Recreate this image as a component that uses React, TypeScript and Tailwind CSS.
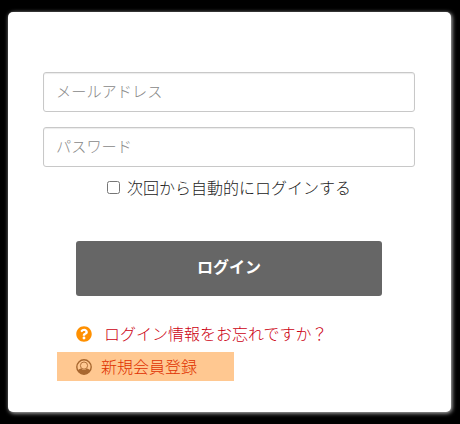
import { useState } from 'react';
import { FaQuestionCircle } from 'react-icons/fa';

interface TextFieldProps {
  type: string;
  placeholder: string;
}

function TextField({ type, placeholder }: TextFieldProps) {
  return (
    <input
      type={type}
      placeholder={placeholder}
      className="block h-10 w-full rounded-[3px] border border-[#c8c8c8] bg-white px-3 pb-1 text-[15.2px] font-light text-[#333] shadow-[inset_0_1px_1px_rgba(0,0,0,0.08)] outline-none placeholder:text-[#888]"
    />
  );
}

function UserIcon() {
  return (
    <svg viewBox="0 0 16 16" className="size-4 shrink-0">
      <circle cx="8" cy="8" r="7.2" fill="none" stroke="currentColor" strokeWidth="1.4" />
      <path
        d="M1.8 11.6C2.6 10.4 3.8 9.9 5 9.5C6.6 11.4 9.4 11.4 11 9.5C12.2 9.9 13.4 10.4 14.2 11.6C12.9 14 10.6 15.2 8 15.2S3.1 14 1.8 11.6Z"
        fill="currentColor"
      />
      <circle cx="8" cy="6.6" r="3.6" fill="none" stroke="currentColor" strokeWidth="0.9" />
    </svg>
  );
}

export default function App() {
  const [remember, setRemember] = useState(false);

  return (
    <div className="h-[424px] w-[460px] bg-black pt-3 pl-2 font-['Noto_Sans_CJK_JP',sans-serif]">
      <form
        className="h-[400px] w-[443px] rounded-[5px] bg-white pt-[60px] pr-9 pl-[35px] shadow-[1px_1px_4px_#ccc]"
        onSubmit={(e) => e.preventDefault()}
      >
        <div className="flex flex-col gap-[15px]">
          <TextField type="text" placeholder="メールアドレス" />
          <TextField type="password" placeholder="パスワード" />
        </div>

        <label className="mt-2 ml-16 flex h-6 items-center gap-[7px] text-base leading-6 font-light text-[#222]">
          <input
            type="checkbox"
            checked={remember}
            onChange={(e) => setRemember(e.target.checked)}
            className="size-[13px]"
          />
          次回から自動的にログインする
        </label>

        <button
          type="submit"
          className="mt-[42px] ml-[33px] block h-[55px] w-[306px] rounded-[3px] bg-[#666] pb-1.5 text-base font-bold text-white"
        >
          ログイン
        </button>

        {/* サブリンク */}
        <div className="mt-[22px] ml-[14px] text-base leading-6 font-light">
          <a href="#" className="flex h-8 items-center gap-3 pl-[19px] text-[#cc0011]">
            <FaQuestionCircle className="size-4 shrink-0 text-[#ff9000]" />
            <span className="pb-0.5">ログイン情報をお忘れですか？</span>
          </a>
          <a href="#" className="mt-0.5 flex h-[29px] w-[177px] items-center gap-[9px] bg-[#ffc891] pl-[19px] text-[#e03000]">
            <span className="text-[#a8672f]">
              <UserIcon />
            </span>
            <span className="pb-0.5">新規会員登録</span>
          </a>
        </div>
      </form>
    </div>
  );
}
